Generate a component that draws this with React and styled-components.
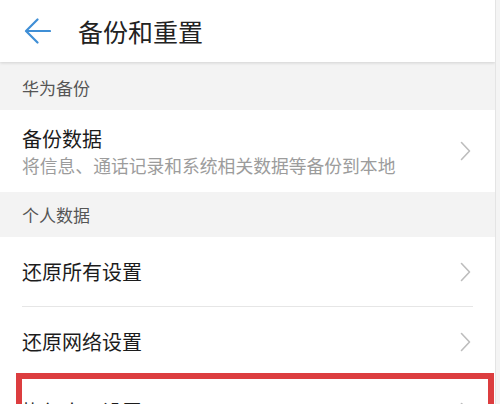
import React from "react";
import styled, { createGlobalStyle } from "styled-components";

const Global = createGlobalStyle`
  html, body { margin: 0; padding: 0; background: #f4f4f4; }
  body { font-family: "Noto Sans CJK SC", "Noto Sans", sans-serif; overflow: hidden; }
`;

const Page = styled.div`
  width: 495px;
  height: 404px;
  background: #ffffff;
  border-right: 1px solid #e4e4e4;
  overflow: hidden;
  display: flex;
  flex-direction: column;
`;

const Header = styled.header`
  height: 62px;
  flex: none;
  display: flex;
  align-items: center;
  padding-left: 24px;
  gap: 27px;
  background: #fff;
  box-shadow: 0 1px 3px rgba(0, 0, 0, 0.14);
  position: relative;
  z-index: 1;
`;

const Title = styled.h1`
  margin: 0;
  font-size: 25px;
  font-weight: 400;
  color: #222;
  letter-spacing: 0;
  line-height: 1;
`;

const SectionHeader = styled.div`
  height: ${(p) => p.$h}px;
  flex: none;
  background: #f3f3f3;
  display: flex;
  align-items: center;
  padding-left: 22px;
  padding-top: ${(p) => p.$pt || 0}px;
  box-sizing: border-box;
  font-size: 17px;
  color: #555;
`;

const Row = styled.div`
  position: relative;
  height: ${(p) => p.$h}px;
  flex: none;
  display: flex;
  align-items: center;
  padding: 0 24px 0 22px;
  box-sizing: border-box;
  background: #fff;
`;

const RowText = styled.div`
  flex: 1;
  display: flex;
  flex-direction: column;
  gap: 3px;
`;

const RowTitle = styled.div`
  font-size: 20px;
  color: #1c1c1c;
  line-height: 24px;
`;

const RowSub = styled.div`
  font-size: 17.8px;
  color: #9c9c9c;
  line-height: 22px;
  white-space: nowrap;
`;

const Divider = styled.div`
  height: 1px;
  flex: none;
  margin: 0 22px 0 22px;
  width: 451px;
  background: #e6e6e6;
`;

const Highlight = styled.div`
  position: absolute;
  left: 16px;
  top: -4px;
  width: 478px;
  height: 80px;
  border: 6px solid #dc3d3f;
  box-sizing: border-box;
  pointer-events: none;
`;

const BackArrow = () => (
  <svg width="27" height="28" viewBox="0 0 27 28" fill="none">
    <path d="M26 14H2.5M13.5 2.5L2 14l11.5 11.5" stroke="#3f8fd6" strokeWidth="2.2" strokeLinecap="round" strokeLinejoin="round" />
  </svg>
);

const Chevron = () => (
  <svg width="11" height="20" viewBox="0 0 11 20" fill="none">
    <path d="M1.5 1.5L9.5 10l-8 8.5" stroke="#bdbdbd" strokeWidth="1.6" strokeLinecap="round" strokeLinejoin="round" />
  </svg>
);

export default function App() {
  return (
    <>
      <Global />
      <Page>
        <Header>
          <BackArrow />
          <Title>备份和重置</Title>
        </Header>
        <SectionHeader $h={48} $pt={2}>华为备份</SectionHeader>
        <Row $h={82}>
          <RowText>
            <RowTitle>备份数据</RowTitle>
            <RowSub>将信息、通话记录和系统相关数据等备份到本地</RowSub>
          </RowText>
          <Chevron />
        </Row>
        <SectionHeader $h={45}>个人数据</SectionHeader>
        <Row $h={69}>
          <RowText>
            <RowTitle>还原所有设置</RowTitle>
          </RowText>
          <Chevron />
        </Row>
        <Divider />
        <Row $h={69}>
          <RowText>
            <RowTitle>还原网络设置</RowTitle>
          </RowText>
          <Chevron />
        </Row>
        <Divider />
        <Row $h={69}>
          <RowText>
            <RowTitle>恢复出厂设置</RowTitle>
          </RowText>
          <Chevron />
          <Highlight />
        </Row>
      </Page>
    </>
  );
}
